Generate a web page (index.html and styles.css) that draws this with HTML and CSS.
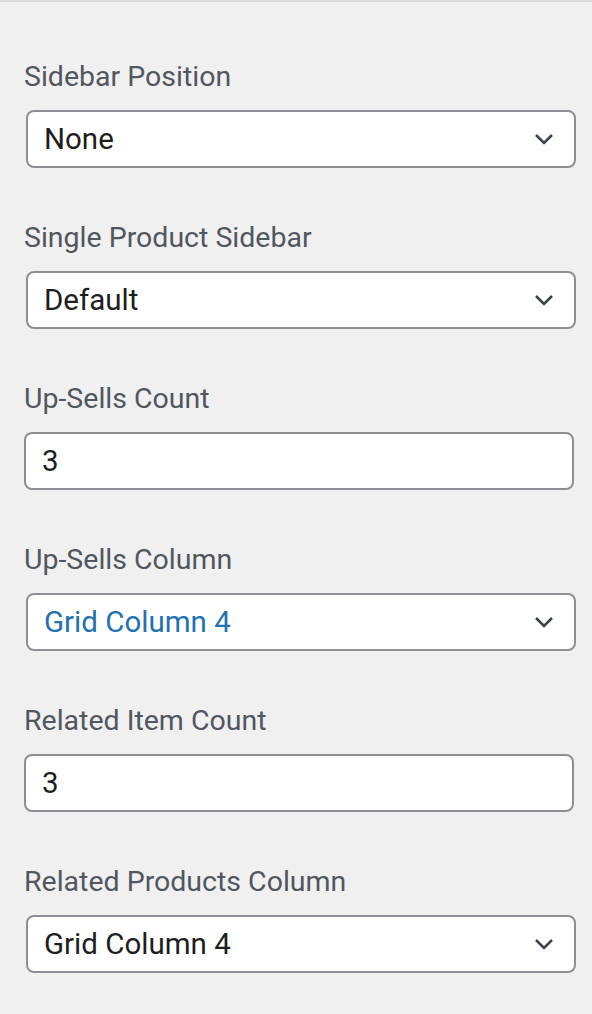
FILE: index.html
```html
<!DOCTYPE html>
<html lang="en">
<head>
<meta charset="utf-8">
<title>Product Settings</title>
<link rel="stylesheet" href="styles.css">
</head>
<body>
<div class="panel">
  <div class="field">
    <div class="label">Sidebar Position</div>
    <div class="control select"><span class="value">None</span><svg class="chev" viewBox="0 0 20 12" width="20" height="12"><path d="M2 2 L10 10 L18 2" fill="none" stroke="#3c434a" stroke-width="2.6"/></svg></div>
  </div>
  <div class="field">
    <div class="label">Single Product Sidebar</div>
    <div class="control select"><span class="value">Default</span><svg class="chev" viewBox="0 0 20 12" width="20" height="12"><path d="M2 2 L10 10 L18 2" fill="none" stroke="#3c434a" stroke-width="2.6"/></svg></div>
  </div>
  <div class="field">
    <div class="label">Up-Sells Count</div>
    <div class="control input"><span class="value">3</span></div>
  </div>
  <div class="field">
    <div class="label">Up-Sells Column</div>
    <div class="control select"><span class="value blue">Grid Column 4</span><svg class="chev" viewBox="0 0 20 12" width="20" height="12"><path d="M2 2 L10 10 L18 2" fill="none" stroke="#3c434a" stroke-width="2.6"/></svg></div>
  </div>
  <div class="field">
    <div class="label">Related Item Count</div>
    <div class="control input"><span class="value">3</span></div>
  </div>
  <div class="field">
    <div class="label">Related Products Column</div>
    <div class="control select"><span class="value">Grid Column 4</span><svg class="chev" viewBox="0 0 20 12" width="20" height="12"><path d="M2 2 L10 10 L18 2" fill="none" stroke="#3c434a" stroke-width="2.6"/></svg></div>
  </div>
</div>
</body>
</html>
```
FILE: styles.css
```css
html, body {
  margin: 0;
  padding: 0;
  background: #f0f0f1;
}
body {
  font-family: "Roboto", "Liberation Sans", sans-serif;
  width: 592px;
  height: 1014px;
  overflow: hidden;
}
.panel {
  border-top: 2px solid #dcdcde;
  padding: 57px 18px 0 24px;
}
.field {
  margin-bottom: 52px;
}
.label {
  font-size: 28.5px;
  line-height: 36px;
  color: #50575e;
  margin-bottom: 15px;
}
.control {
  box-sizing: border-box;
  height: 58px;
  width: 550px;
  background: #fff;
  border: 2px solid #8c8f94;
  border-radius: 8px;
  display: flex;
  align-items: center;
  padding: 0 20px 0 16px;
}
.select {
  margin-left: 2px;
  justify-content: space-between;
}
.value {
  font-size: 29.5px;
  color: #1e1e1e;
}
.value.blue {
  color: #2271b1;
}
.chev {
  display: block;
}
```
